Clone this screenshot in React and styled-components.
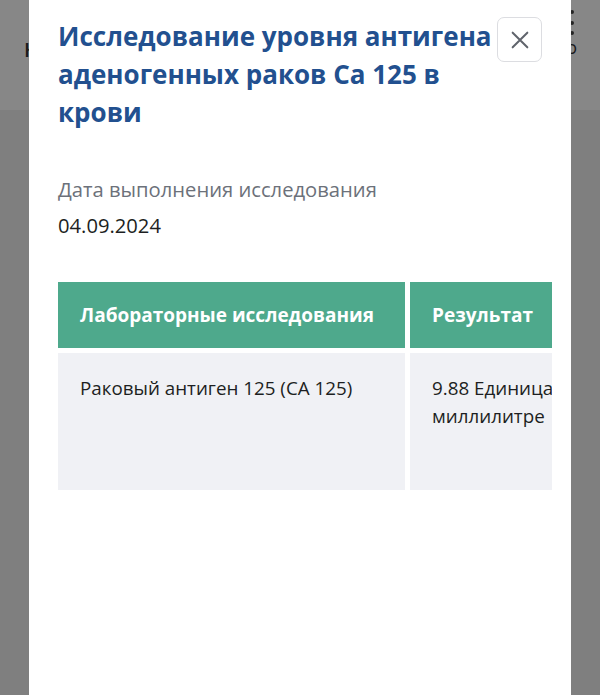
import React from "react";
import styled, { createGlobalStyle } from "styled-components";

const Global = createGlobalStyle`
  html, body { margin: 0; padding: 0; }
  body { font-family: "Open Sans", "Liberation Sans", sans-serif; background: #f0f0f0; }
  * { box-sizing: border-box; }
`;

const Page = styled.div`
  position: relative;
  width: 600px;
  height: 695px;
  overflow: hidden;
  background: #f0f0f0;
`;

const PageHeader = styled.header`
  height: 110px;
  background: #ffffff;
  display: flex;
  align-items: flex-start;
  justify-content: space-between;
  padding: 10px 0 0 24px;
`;

const PageTitle = styled.div`
  margin-top: 26px;
  font-size: 20px;
  font-weight: 600;
  color: #333;
`;

const PageRight = styled.div`
  display: flex;
  flex-direction: column;
  align-items: flex-end;
`;

const Kebab = styled.div`
  display: flex;
  flex-direction: column;
  gap: 6.5px;
  padding-right: 26px;
  span {
    width: 4px;
    height: 4px;
    border-radius: 50%;
    background: #444;
  }
`;

const PageLink = styled.div`
  font-size: 18px;
  line-height: 24px;
  color: #333;
  padding-right: 23px;
`;

const Overlay = styled.div`
  position: absolute;
  inset: 0;
  background: rgba(0, 0, 0, 0.47);
  display: flex;
  justify-content: center;
`;

const Modal = styled.div`
  width: 542px;
  height: 100%;
  background: #ffffff;
  padding: 17px 19px 0 29px;
  display: flex;
  flex-direction: column;
`;

const ModalHead = styled.div`
  display: flex;
  align-items: flex-start;
`;

const Title = styled.h2`
  flex: 1;
  margin: 0;
  font-size: 26px;
  line-height: 38px;
  font-weight: 700;
  color: #22508f;
`;

const CloseButton = styled.button`
  flex: none;
  width: 45px;
  height: 45px;
  margin-right: 10px;
  border: 1px solid #dcdde1;
  border-radius: 7px;
  background: #fff;
  display: flex;
  align-items: center;
  justify-content: center;
  padding: 0;
  color: #60646c;
`;

const Field = styled.div`
  margin-top: 44px;
  display: flex;
  flex-direction: column;
  gap: 8px;
`;

const Label = styled.div`
  font-size: 20.2px;
  line-height: 28px;
  color: #6c717a;
`;

const Value = styled.div`
  font-size: 20.2px;
  line-height: 28px;
  color: #1d1f22;
`;

const TableScroll = styled.div`
  margin-top: 43px;
  overflow: hidden;
`;

const Grid = styled.div`
  display: grid;
  grid-template-columns: 347px 220px;
  grid-template-rows: 66px 137px;
  gap: 5px;
`;

const HeadCell = styled.div`
  background: #4ea98c;
  color: #ffffff;
  font-weight: 700;
  font-size: 19px;
  line-height: 26px;
  padding: 0 22px;
  display: flex;
  align-items: center;
  white-space: nowrap;
`;

const BodyCell = styled.div`
  background: #f0f1f5;
  color: #1d1f22;
  font-size: 18.8px;
  line-height: 28px;
  padding: 21px 22px;
`;

const XIcon = () => (
  <svg width="22" height="22" viewBox="0 0 24 24" fill="none" stroke="currentColor" strokeWidth="2.2" strokeLinecap="round">
    <path d="M4 4L20 20M20 4L4 20" />
  </svg>
);

export default function App() {
  return (
    <>
      <Global />
      <Page>
        <PageHeader>
          <PageTitle>Карта</PageTitle>
          <PageRight>
            <Kebab>
              <span />
              <span />
              <span />
            </Kebab>
            <PageLink>Инфо</PageLink>
          </PageRight>
        </PageHeader>
        <Overlay>
          <Modal>
            <ModalHead>
              <Title>Исследование уровня антигена аденогенных раков Са 125 в крови</Title>
              <CloseButton aria-label="Закрыть">
                <XIcon />
              </CloseButton>
            </ModalHead>
            <Field>
              <Label>Дата выполнения исследования</Label>
              <Value>04.09.2024</Value>
            </Field>
            <TableScroll>
              <Grid>
                <HeadCell>Лабораторные исследования</HeadCell>
                <HeadCell>Результат</HeadCell>
                <BodyCell>Раковый антиген 125 (СА 125)</BodyCell>
                <BodyCell>9.88 Единица на миллилитре</BodyCell>
              </Grid>
            </TableScroll>
          </Modal>
        </Overlay>
      </Page>
    </>
  );
}
